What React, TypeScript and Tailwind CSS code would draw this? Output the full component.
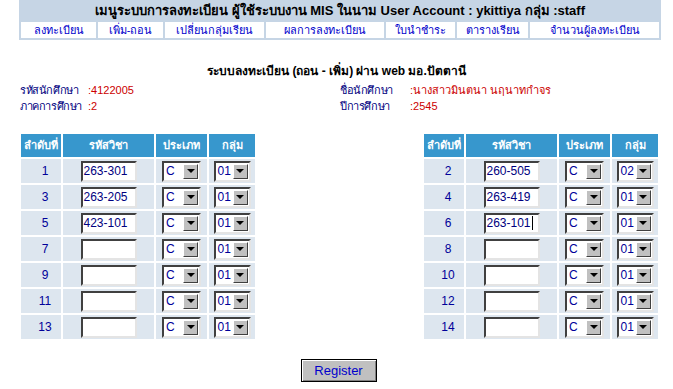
import React from 'react';

const navItems = [
  { label: 'ลงทะเบียน', w: 'w-[75px]' },
  { label: 'เพิ่ม-ถอน', w: 'w-[65px]' },
  { label: 'เปลี่ยนกลุ่มเรียน', w: 'w-[99px]' },
  { label: 'ผลการลงทะเบียน', w: 'w-[118px]' },
  { label: 'ใบนำชำระ', w: 'w-[69px]' },
  { label: 'ตารางเรียน', w: 'w-[71px]' },
  { label: 'จำนวนผู้ลงทะเบียน', w: 'flex-1' },
];

type Row = { no: number; code: string; group: string; caret?: boolean };

const leftRows: Row[] = [
  { no: 1, code: '263-301', group: '01' },
  { no: 3, code: '263-205', group: '01' },
  { no: 5, code: '423-101', group: '01' },
  { no: 7, code: '', group: '01' },
  { no: 9, code: '', group: '01' },
  { no: 11, code: '', group: '01' },
  { no: 13, code: '', group: '01' },
];

const rightRows: Row[] = [
  { no: 2, code: '260-505', group: '02' },
  { no: 4, code: '263-419', group: '01' },
  { no: 6, code: '263-101', group: '01', caret: true },
  { no: 8, code: '', group: '01' },
  { no: 10, code: '', group: '01' },
  { no: 12, code: '', group: '01' },
  { no: 14, code: '', group: '01' },
];

// old-school sunken field border
const sunken =
  'border-2 border-t-[#404040] border-l-[#404040] border-b-[#e4e4e4] border-r-[#e4e4e4] bg-white';

function TextBox({ value, caret }: { value: string; caret?: boolean }) {
  return (
    <div className={`${sunken} w-[56px] h-[21px] flex items-center pl-[1px] text-[12px] text-[#000080] leading-none`}>
      <span>{value}</span>
      {caret && <span className="ml-[1px] w-px h-[14px] bg-black" />}
    </div>
  );
}

function DropDown({ value, w }: { value: string; w: string }) {
  return (
    <div className={`${sunken} ${w} h-[21px] flex items-center justify-between text-[12px] text-[#000099] leading-none`}>
      <span className="pl-[2px]">{value}</span>
      <div className="w-[15px] h-[15px] mr-[1px] bg-[#c0c0c0] border border-t-white border-l-white border-b-[#404040] border-r-[#404040] flex items-center justify-center">
        <div className="w-0 h-0 border-l-[4px] border-r-[4px] border-t-[4px] border-l-transparent border-r-transparent border-t-black" />
      </div>
    </div>
  );
}

function CourseTable({ rows }: { rows: Row[] }) {
  return (
    <div className="flex flex-col gap-[2px] p-[2px] w-[240px]">
      <div className="flex gap-[2px] h-[23px] text-white font-bold text-[11px] whitespace-nowrap">
        <div className="w-[40px] bg-[#3797cd] flex items-center justify-center">ลำดับที่</div>
        <div className="w-[91px] bg-[#3797cd] flex items-center justify-center">รหัสวิชา</div>
        <div className="w-[51px] bg-[#3797cd] flex items-center justify-center">ประเภท</div>
        <div className="w-[46px] bg-[#3797cd] flex items-center justify-center">กลุ่ม</div>
      </div>
      {rows.map((r) => (
        <div key={r.no} className="flex gap-[2px] h-[24px]">
          <div className="w-[40px] bg-[#dde6ef] flex items-center justify-center pl-[8px] text-[12px] text-[#000099]">
            {r.no}
          </div>
          <div className="w-[91px] bg-[#dde6ef] flex items-center justify-center">
            <TextBox value={r.code} caret={r.caret} />
          </div>
          <div className="w-[51px] bg-[#dde6ef] flex items-center justify-center">
            <DropDown value="C" w="w-[39px]" />
          </div>
          <div className="w-[46px] bg-[#dde6ef] flex items-center justify-center">
            <DropDown value={r.group} w="w-[37px]" />
          </div>
        </div>
      ))}
    </div>
  );
}

export default function App() {
  return (
    <div className="w-[673px] h-[389px] bg-white overflow-hidden font-['Liberation_Sans','Tahoma','Noto_Sans',sans-serif]">
      {/* top menu bar */}
      <div className="ml-[19px] w-[642px] bg-[#c6d5e5]">
        <div className="h-[21px] flex items-center justify-center text-[13px] font-bold text-black whitespace-nowrap">
          เมนูระบบการลงทะเบียน ผู้ใช้ระบบงาน MIS ในนาม User Account : ykittiya กลุ่ม :staff
        </div>
        <div className="flex gap-[2px] px-[2px] pb-[2px] pt-[1px]">
          {navItems.map((n) => (
            <div
              key={n.label}
              className={`${n.w} h-[16px] bg-white flex items-center justify-center text-[11px] text-[#0000cc] whitespace-nowrap`}
            >
              {n.label}
            </div>
          ))}
        </div>
      </div>

      <div className="mt-[22px] text-center text-[12px] font-bold text-black whitespace-nowrap">
        ระบบลงทะเบียน (ถอน - เพิ่ม) ผ่าน web มอ.ปัตตานี
      </div>

      <div className="mt-[2px] pl-[20px] grid grid-cols-[68px_252px_70px_1fr] text-[11px] leading-[16px] whitespace-nowrap">
        <div className="text-[#000080] tracking-[-0.4px]">รหัสนักศึกษา</div>
        <div className="text-[#cc0000]">:4122005</div>
        <div className="text-[#000080] tracking-[-0.4px]">ชื่อนักศึกษา</div>
        <div className="text-[#cc0000]">:นางสาวมินตนา นฤนาทกำจร</div>
        <div className="text-[#000080] tracking-[-0.4px]">ภาคการศึกษา</div>
        <div className="text-[#cc0000]">:2</div>
        <div className="text-[#000080] tracking-[-0.4px]">ปีการศึกษา</div>
        <div className="text-[#cc0000]">:2545</div>
      </div>

      <div className="mt-[18px] flex gap-[163px] pl-[19px]">
        <CourseTable rows={leftRows} />
        <CourseTable rows={rightRows} />
      </div>

      <div className="mt-[18px] flex justify-center pl-[4px]">
        <button
          type="button"
          className="w-[76px] h-[23px] bg-[#c0c0c0] border border-black shadow-[inset_1px_1px_0_#ffffff,inset_-1px_-1px_0_#808080] text-[13px] text-[#0000cc]"
        >
          Register
        </button>
      </div>
    </div>
  );
}
